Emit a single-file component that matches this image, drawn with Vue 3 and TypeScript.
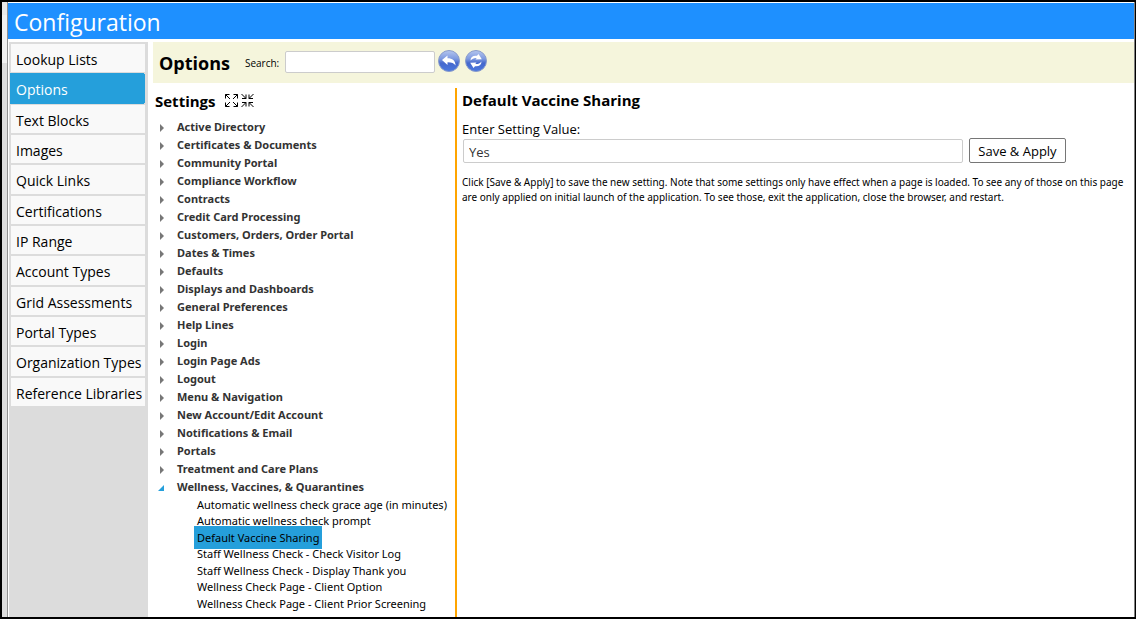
<script setup lang="ts">
import { ref } from 'vue'

const sections: string[] = [
  'Lookup Lists', 'Options', 'Text Blocks', 'Images', 'Quick Links', 'Certifications',
  'IP Range', 'Account Types', 'Grid Assessments', 'Portal Types', 'Organization Types',
  'Reference Libraries',
]
const groups: string[] = [
  'Active Directory', 'Certificates & Documents', 'Community Portal', 'Compliance Workflow',
  'Contracts', 'Credit Card Processing', 'Customers, Orders, Order Portal', 'Dates & Times',
  'Defaults', 'Displays and Dashboards', 'General Preferences', 'Help Lines', 'Login',
  'Login Page Ads', 'Logout', 'Menu & Navigation', 'New Account/Edit Account',
  'Notifications & Email', 'Portals', 'Treatment and Care Plans',
  'Wellness, Vaccines, & Quarantines',
]
const leaves: string[] = [
  'Automatic wellness check grace age (in minutes)', 'Automatic wellness check prompt',
  'Default Vaccine Sharing', 'Staff Wellness Check - Check Visitor Log',
  'Staff Wellness Check - Display Thank you', 'Wellness Check Page - Client Option',
  'Wellness Check Page - Client Prior Screening',
]
const activeSection = ref('Options')
const openGroup = ref('Wellness, Vaccines, & Quarantines')
const selected = ref('Default Vaccine Sharing')
const search = ref('')
const settingValue = ref('Yes')
</script>

<template>
  <div class="frame">
    <div class="edge"></div>
    <div class="window">
      <header class="titlebar"><h1>Configuration</h1></header>
      <div class="body">
        <nav class="sidebar">
          <div class="sections">
            <a
              v-for="s in sections" :key="s" href="#" class="section"
              :class="{ active: s === activeSection }" @click.prevent="activeSection = s"
            >{{ s }}</a>
          </div>
        </nav>
        <main class="main">
          <form class="toolbar" @submit.prevent>
            <h2>Options</h2>
            <label for="search">Search:</label>
            <input id="search" v-model="search" type="text" />
            <button type="button" class="orb" aria-label="Undo" @click="search = ''">
              <svg width="24" height="24" viewBox="0 0 24 24">
                <defs>
                  <linearGradient id="orb-a" x1="0" y1="0" x2="0" y2="1">
                    <stop offset="0" stop-color="#b5c6ee" /><stop offset=".4" stop-color="#7d99e0" />
                    <stop offset=".6" stop-color="#4568cc" /><stop offset="1" stop-color="#4a78e0" />
                  </linearGradient>
                </defs>
                <circle cx="12" cy="12" r="10.5" fill="url(#orb-a)" stroke="#8a9ccb" />
                <path d="M5 11 10.500 6.500V9.200C15.500 9.200 18.300 11.500 18.600 16.500 16.800 14 14.500 13.200 10.500 13.300V16Z" fill="#fff" />
              </svg>
            </button>
            <button type="button" class="orb" aria-label="Refresh">
              <svg width="24" height="24" viewBox="0 0 24 24">
                <circle cx="12" cy="12" r="10.5" fill="url(#orb-a)" stroke="#8a9ccb" />
                <path d="M6.500 11.500C6.500 8 9 6.300 13 6.800L14.500 5 17.800 10.300 11.500 10.500 12.700 9C10 8.700 8.500 9.500 6.500 11.500ZM17.500 12.500C17.500 16 15 17.700 11 17.200L9.500 19 6.200 13.700 12.500 13.500 11.300 15C14 15.300 15.500 14.500 17.500 12.500Z" fill="#fff" />
              </svg>
            </button>
          </form>
          <div class="panes">
            <section class="tree">
              <div class="tree-head">
                <h3>Settings</h3>
                <button type="button" class="tool" aria-label="Expand all">
                  <svg width="13" height="13" viewBox="0 0 13 13">
                    <path d="M.5 4.500V.5H4.500M8.500 .5h4V4.500M12.500 8.500v4H8.500M4.500 12.500H.5V8.500M.5.5l4.500 4.500M12.500.5l-4.500 4.500M12.500 12.500l-4.500-4.500M.5 12.500l4.500-4.500" />
                  </svg>
                </button>
                <button type="button" class="tool" aria-label="Collapse all">
                  <svg width="13" height="13" viewBox="0 0 13 13">
                    <path d="M1 4.500h4V.5M8 .5v4h4M12 8.500h-4v4M5 12.500v-4H1M.5 0l4.500 4.500M12.500 0l-4.500 4.500M12.500 13l-4.500-4.500M.5 13l4.500-4.500" />
                  </svg>
                </button>
              </div>
              <ul class="groups">
                <li v-for="g in groups" :key="g">
                  <button type="button" class="group" @click="openGroup = g">
                    <svg width="8" height="8" viewBox="0 0 8 8">
                      <path v-if="g === openGroup" d="M7 1v6H1Z" fill="#259fdb" />
                      <path v-else d="M3 0 7 4 3 8Z" fill="#777" />
                    </svg>
                    <span>{{ g }}</span>
                  </button>
                </li>
              </ul>
              <ul class="leaves">
                <li v-for="l in leaves" :key="l">
                  <button type="button" class="leaf" :class="{ selected: l === selected }" @click="selected = l">{{ l }}</button>
                </li>
              </ul>
            </section>
            <form class="detail" @submit.prevent>
              <h3>{{ selected }}</h3>
              <label for="value">Enter Setting Value:</label>
              <div class="row">
                <input id="value" v-model="settingValue" type="text" />
                <button type="submit" class="apply">Save &amp; Apply</button>
              </div>
              <p>
                Click [Save &amp; Apply] to save the new setting. Note that some settings only have effect when a page is loaded. To see any of those on this page<br />
                are only applied on initial launch of the application. To see those, exit the application, close the browser, and restart.
              </p>
            </form>
          </div>
        </main>
      </div>
    </div>
  </div>
</template>

<style>
body { margin: 0; }
</style>

<style scoped>
* { box-sizing: border-box; }
.frame {
  display: flex;
  min-height: 100vh;
  border: 2px solid #000;
  border-right-width: 1px;
  background: #fff;
  font-family: "Open Sans", "Noto Sans", sans-serif;
  color: #000;
}
h1, h2, h3, ul, p { margin: 0; padding: 0; }
ul { list-style: none; }
button { font: inherit; color: inherit; background: none; border: 0; padding: 0; cursor: pointer; }
input { font: inherit; border: 1px solid #ccc; border-radius: 2px; background: #fff; }
.edge {
  width: 6px;
  flex: none;
  border-right: 1px solid #909090;
  background: linear-gradient(#e9e9e9 13px, #f0f0f0 13px, #f0f0f0 61px, #dcdcdc 61px);
}
.window {
  flex: 1;
  min-width: 0;
  display: flex;
  flex-direction: column;
  padding-top: 1px;
  border-right: 1px solid #808080;
}
.titlebar { background: #1e90ff; height: 36px; padding-left: 6px; }
h1 { font-size: 23px; line-height: 38px; font-weight: 400; color: #fff; }
.body { flex: 1; display: flex; gap: 5px; padding: 3px 0 0 1px; }
.sidebar { width: 139px; flex: none; background: #dcdcdc; padding: 2px 3px 0 2px; }
.sections { display: grid; grid-auto-rows: 1fr; gap: 2px; height: 362px; }
.section {
  display: flex;
  align-items: center;
  padding: 4px 0 0 5px;
  background: #f9f9f9;
  color: #000;
  font-size: 14px;
  line-height: 20px;
  text-decoration: none;
  white-space: nowrap;
}
.section.active { background: #259fdb; color: #fff; box-shadow: -1px -1px #259fdb, -1px 1px #259fdb; }
.main { flex: 1; min-width: 0; display: flex; flex-direction: column; }
.toolbar { display: flex; align-items: center; height: 41px; padding-left: 6px; background: #f5f5dc; }
h2 { font-size: 18px; line-height: 24px; margin-right: 15px; }
.toolbar label { font-size: 10px; margin-right: 6px; }
.toolbar input { width: 150px; height: 22px; font-size: 12px; margin: 0 2px 2px 0; }
.orb { width: 24px; height: 24px; margin: 0 3px 4px 0; }
.orb svg { display: block; }
.panes { flex: 1; display: flex; padding-top: 5px; }
.tree { width: 304px; flex: none; border-right: 2px solid #ffa500; padding-left: 2px; }
.tree-head { display: flex; align-items: center; gap: 3px; height: 29px; padding-bottom: 3px; }
h3 { font-size: 15px; line-height: 24px; }
.tree-head h3 { margin-right: 6px; }
.tool { height: 13px; padding: 0; }
.tool svg { display: block; margin-top: -2px; fill: none; stroke: #000; }
.group {
  display: flex;
  align-items: center;
  gap: 12px;
  height: 18px;
  padding-left: 2px;
  color: #333;
  font-family: "Noto Sans", "Open Sans", sans-serif;
  font-size: 11px;
  font-weight: 700;
  white-space: nowrap;
}
.group svg { margin-top: 4px; }
.leaves { display: grid; grid-auto-rows: 1fr; height: 116px; margin-top: 1px; padding-left: 39px; }
.leaves li { display: flex; align-items: center; height: 16px; }
.leaf { height: 23px; padding: 0 3px; font-family: "Noto Sans", "Open Sans", sans-serif; font-size: 11px; white-space: nowrap; }
.leaf.selected { background: #259fdb; }
.detail { flex: 1; min-width: 0; padding-left: 5px; overflow: hidden; }
.detail label { display: block; margin-top: 8px; font-size: 13px; line-height: 18px; }
.row { display: flex; align-items: center; gap: 6px; padding-left: 1px; }
.row input { flex: 0 1 500px; min-width: 0; height: 24px; padding: 2px 5px 0; font-size: 13px; color: #333; }
.apply { width: 97px; height: 25px; flex: none; border: 1px solid #767676; border-radius: 2px; font-size: 13px; }
.detail p { margin-top: 12px; font-family: "Noto Sans", "Open Sans", sans-serif; font-size: 10px; line-height: 15px; white-space: nowrap; }
</style>
